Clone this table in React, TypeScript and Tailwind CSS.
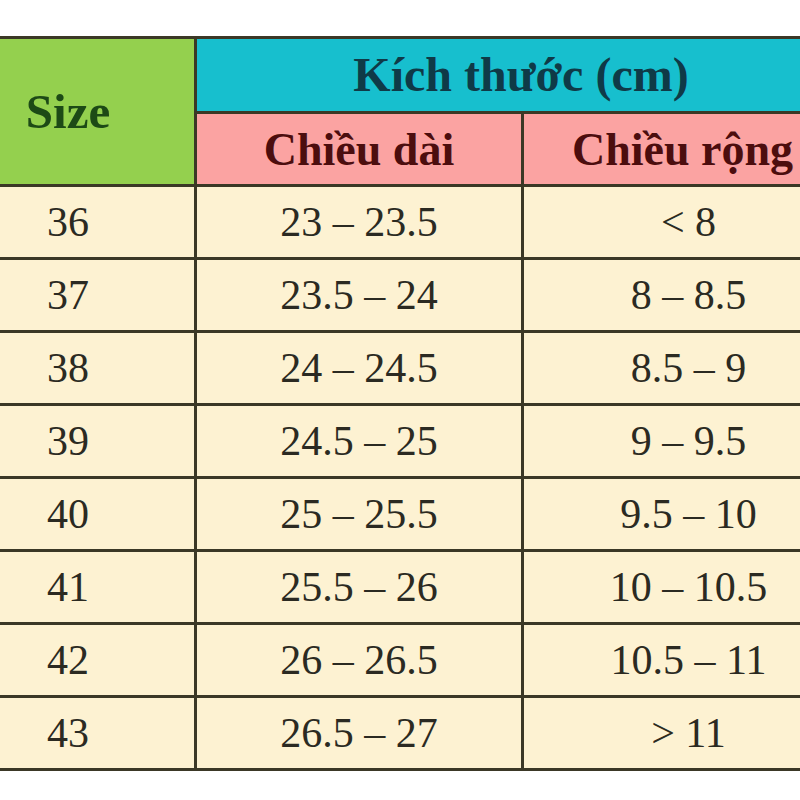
const ROWS = [
  ["36", "23 – 23.5", "< 8"],
  ["37", "23.5 – 24", "8 – 8.5"],
  ["38", "24 – 24.5", "8.5 – 9"],
  ["39", "24.5 – 25", "9 – 9.5"],
  ["40", "25 – 25.5", "9.5 – 10"],
  ["41", "25.5 – 26", "10 – 10.5"],
  ["42", "26 – 26.5", "10.5 – 11"],
  ["43", "26.5 – 27", "> 11"],
];

const line = "border-[3px] border-[#3b3826]";

export default function App() {
  return (
    <div
      className="w-[800px] h-[800px] overflow-hidden bg-white pt-[36px]"
      style={{ fontFamily: '"Liberation Serif", "DejaVu Serif", serif' }}
    >
      <table className="ml-[-3px] w-[856px] border-collapse table-fixed">
        <colgroup>
          <col className="w-[197px]" />
          <col className="w-[327px]" />
          <col className="w-[332px]" />
        </colgroup>
        <thead>
          <tr className="h-[74px]">
            <th
              rowSpan={2}
              className={`${line} bg-[#94d04e] text-[#1d4a16] text-[49px] font-bold pr-[58px]`}
            >
              Size
            </th>
            <th
              colSpan={2}
              className={`${line} bg-[#17bfce] text-[#0f3a47] text-[48px] font-bold pr-[8px]`}
            >
              Kích thước (cm)
            </th>
          </tr>
          <tr className="h-[73px]">
            <th className={`${line} bg-[#fba3a2] text-[#4c0d0e] text-[46px] font-bold`}>
              Chiều dài
            </th>
            <th className={`${line} bg-[#fba3a2] text-[#4c0d0e] text-[46px] font-bold pr-[12px]`}>
              Chiều rộng
            </th>
          </tr>
        </thead>
        <tbody>
          {ROWS.map(([s, l, w]) => (
            <tr key={s} className="h-[73px] bg-[#fdf2d2] text-[#2b2a22] text-[42px]">
              <td className={`${line} text-center pr-[58px]`}>{s}</td>
              <td className={`${line} text-center`}>{l}</td>
              <td className={`${line} text-center`}>{w}</td>
            </tr>
          ))}
        </tbody>
      </table>
    </div>
  );
}
